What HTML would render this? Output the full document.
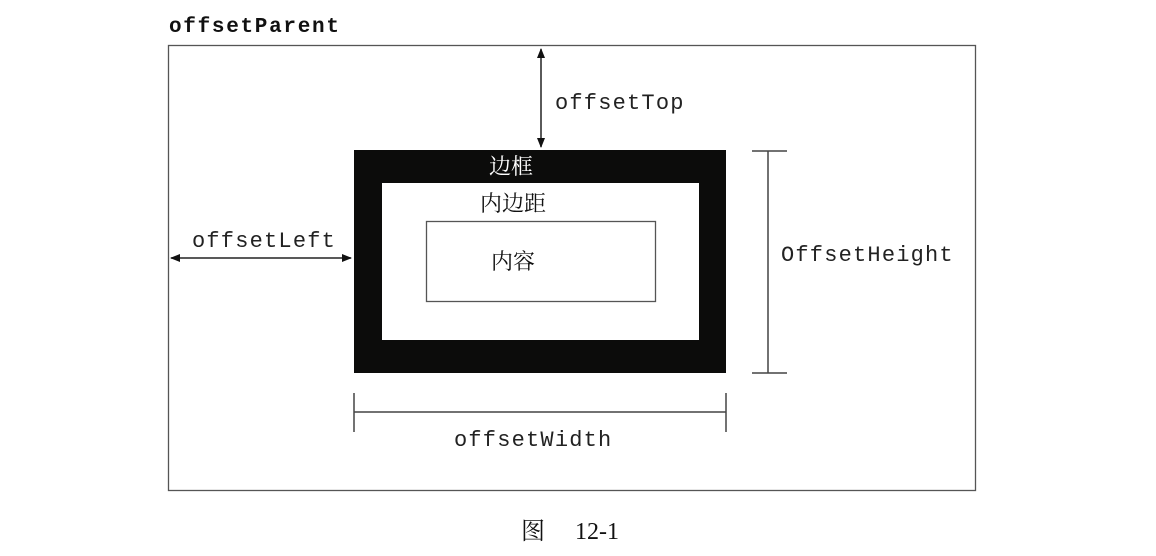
<!DOCTYPE html>
<html><head><meta charset="utf-8"><style>
html,body{margin:0;padding:0;background:#fff;width:1156px;height:556px;overflow:hidden}
</style></head><body>
<svg width="1156" height="556" viewBox="0 0 1156 556" xmlns="http://www.w3.org/2000/svg">
<defs><marker id="a" markerWidth="10" markerHeight="10" refX="9" refY="5" orient="auto-start-reverse" markerUnits="userSpaceOnUse"><path d="M0,1 L10,5 L0,9 Z" fill="#111"/></marker></defs>
<text x="169" y="32" font-family="Liberation Mono, monospace" font-weight="bold" font-size="21" letter-spacing="1.7" fill="#111">offsetParent</text>
<rect x="168.5" y="45.5" width="807" height="445" fill="none" stroke="#555" stroke-width="1.3"/>
<rect x="354" y="150" width="372" height="223" fill="#0c0c0b"/>
<rect x="382" y="183" width="317" height="157" fill="#fff"/>
<rect x="426.5" y="221.5" width="229" height="80" fill="none" stroke="#555" stroke-width="1.3"/>
<line x1="541" y1="49" x2="541" y2="147" stroke="#222" stroke-width="1.5" marker-start="url(#a)" marker-end="url(#a)"/>
<line x1="171" y1="258" x2="351" y2="258" stroke="#222" stroke-width="1.5" marker-start="url(#a)" marker-end="url(#a)"/>
<g stroke="#444" stroke-width="1.5">
<line x1="768" y1="151" x2="768" y2="373"/><line x1="752" y1="151" x2="787" y2="151"/><line x1="752" y1="373" x2="787" y2="373"/>
<line x1="354" y1="412" x2="726" y2="412"/><line x1="354" y1="393" x2="354" y2="432"/><line x1="726" y1="393" x2="726" y2="432"/>
</g>
<g font-family="Liberation Mono, monospace" font-size="22" letter-spacing="1.2" fill="#222">
<text x="555" y="109">offsetTop</text>
<text x="192" y="247">offsetLeft</text>
<text x="781" y="261">OffsetHeight</text>
<text x="454" y="446">offsetWidth</text>
</g>
<g font-family="Liberation Serif, Noto Serif CJK SC, serif" font-size="22" fill="#111">
<text x="489" y="174" fill="#fff">边框</text>
<text x="480" y="211">内边距</text>
<text x="491" y="269">内容</text>
<text x="521" y="539" font-size="24">图</text>
<text x="575" y="539" font-size="24">12-1</text>
</g>
</svg>
</body></html>
